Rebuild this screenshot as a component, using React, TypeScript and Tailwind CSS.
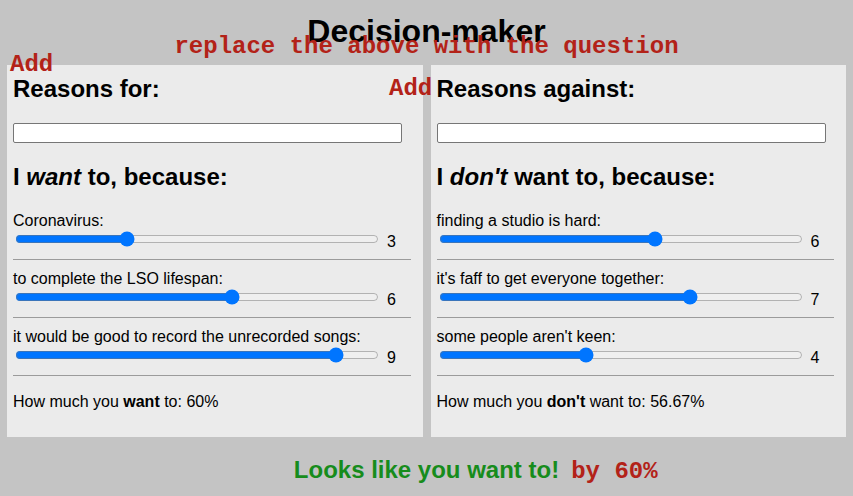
import { useState } from 'react';

type Reason = { label: string; value: number };

const initialFor: Reason[] = [
  { label: 'Coronavirus:', value: 3 },
  { label: 'to complete the LSO lifespan:', value: 6 },
  { label: 'it would be good to record the unrecorded songs:', value: 9 },
];

const initialAgainst: Reason[] = [
  { label: 'finding a studio is hard:', value: 6 },
  { label: "it's faff to get everyone together:", value: 7 },
  { label: "some people aren't keen:", value: 4 },
];

function percent(reasons: Reason[]) {
  if (!reasons.length) return 0;
  const total = reasons.reduce((sum, r) => sum + r.value, 0);
  return Math.round((total / (reasons.length * 10)) * 10000) / 100;
}

export default function App() {
  const [reasonsFor, setReasonsFor] = useState(initialFor);
  const [reasonsAgainst, setReasonsAgainst] = useState(initialAgainst);

  const want = percent(reasonsFor);
  const dontWant = percent(reasonsAgainst);
  const wantTo = want >= dontWant;

  return (
    <div className="relative min-h-screen bg-[#c4c4c4] font-['Liberation_Sans',Arial,sans-serif] text-black">
      <h1 className="pt-[13px] text-center text-[32px] font-bold leading-[36px]">Decision-maker</h1>
      <p className="absolute left-0 right-0 top-[35px] text-center font-['Liberation_Mono','Courier_New',monospace] text-[24px] font-bold leading-[24px] text-[#b32218]">
        replace the above with the question
      </p>

      <div className="mt-4 flex gap-2 px-[7px]">
        <Panel
          title="Reasons for:"
          heading={
            <>
              I <em>want</em> to, because:
            </>
          }
          reasons={reasonsFor}
          onChange={setReasonsFor}
          summary={
            <>
              How much you <b>want</b> to: {want}%
            </>
          }
        />
        <Panel
          title="Reasons against:"
          heading={
            <>
              I <em>don't</em> want to, because:
            </>
          }
          reasons={reasonsAgainst}
          onChange={setReasonsAgainst}
          summary={
            <>
              How much you <b>don't</b> want to: {dontWant}%
            </>
          }
        />
      </div>

      <AddLabel className="left-[10px] top-[53px]" />
      <AddLabel className="left-[389px] top-[77px]" />

      <div className="mt-[19px] text-center">
        <span className="relative inline-block text-[24px] font-bold leading-[28px] text-[#178c1c]">
          {wantTo ? 'Looks like you want to!' : "Looks like you don't want to!"}
          <span className="absolute left-full top-[2px] ml-[12px] whitespace-nowrap font-['Liberation_Mono','Courier_New',monospace] font-bold text-[#b32218]">
            by {wantTo ? want : dontWant}%
          </span>
        </span>
      </div>
    </div>
  );
}

function AddLabel({ className }: { className: string }) {
  return (
    <span
      className={
        'absolute cursor-pointer font-[\'Liberation_Mono\',\'Courier_New\',monospace] text-[24px] font-bold leading-[24px] text-[#b32218] ' +
        className
      }
    >
      Add
    </span>
  );
}

function Panel({ title, heading, reasons, onChange, summary }: any) {
  const update = (i: number, value: number) => {
    onChange(reasons.map((r: Reason, j: number) => (j === i ? { ...r, value } : r)));
  };

  return (
    <div className="h-[372px] flex-1 bg-[#ebebeb] px-[6px] pt-[10px]">
      <h2 className="text-[24px] font-bold leading-[28px]">{title}</h2>
      <input
        type="text"
        className="mt-5 block h-5 w-[389px] rounded-[2px] border border-[#767676] bg-white px-1 text-[13px] outline-none"
      />
      <h2 className="mt-5 text-[24px] font-bold leading-[28px]">{heading}</h2>
      <div className="mt-[21px]">
        {reasons.map((r: Reason, i: number) => (
          <div key={i}>
            {i > 0 && <div className="mb-[10px] mt-3 mr-[6px] border-t border-[#9b9b9b]" />}
            <div className="text-[16px] leading-[18px]">{r.label}</div>
            <div className="mt-px flex h-4 items-start">
              <input
                type="range"
                min={0}
                max={10}
                value={r.value}
                onChange={(e) => update(i, Number(e.target.value))}
                className="ml-[2px] h-4 w-[364px] accent-[#0075ff]"
              />
              <span className="ml-2 pt-[3px] text-[16px] leading-4">{r.value}</span>
            </div>
          </div>
        ))}
        <div className="mt-3 mr-[6px] border-t border-[#9b9b9b]" />
      </div>
      <p className="mt-[17px] text-[16px] leading-[18px]">{summary}</p>
    </div>
  );
}
